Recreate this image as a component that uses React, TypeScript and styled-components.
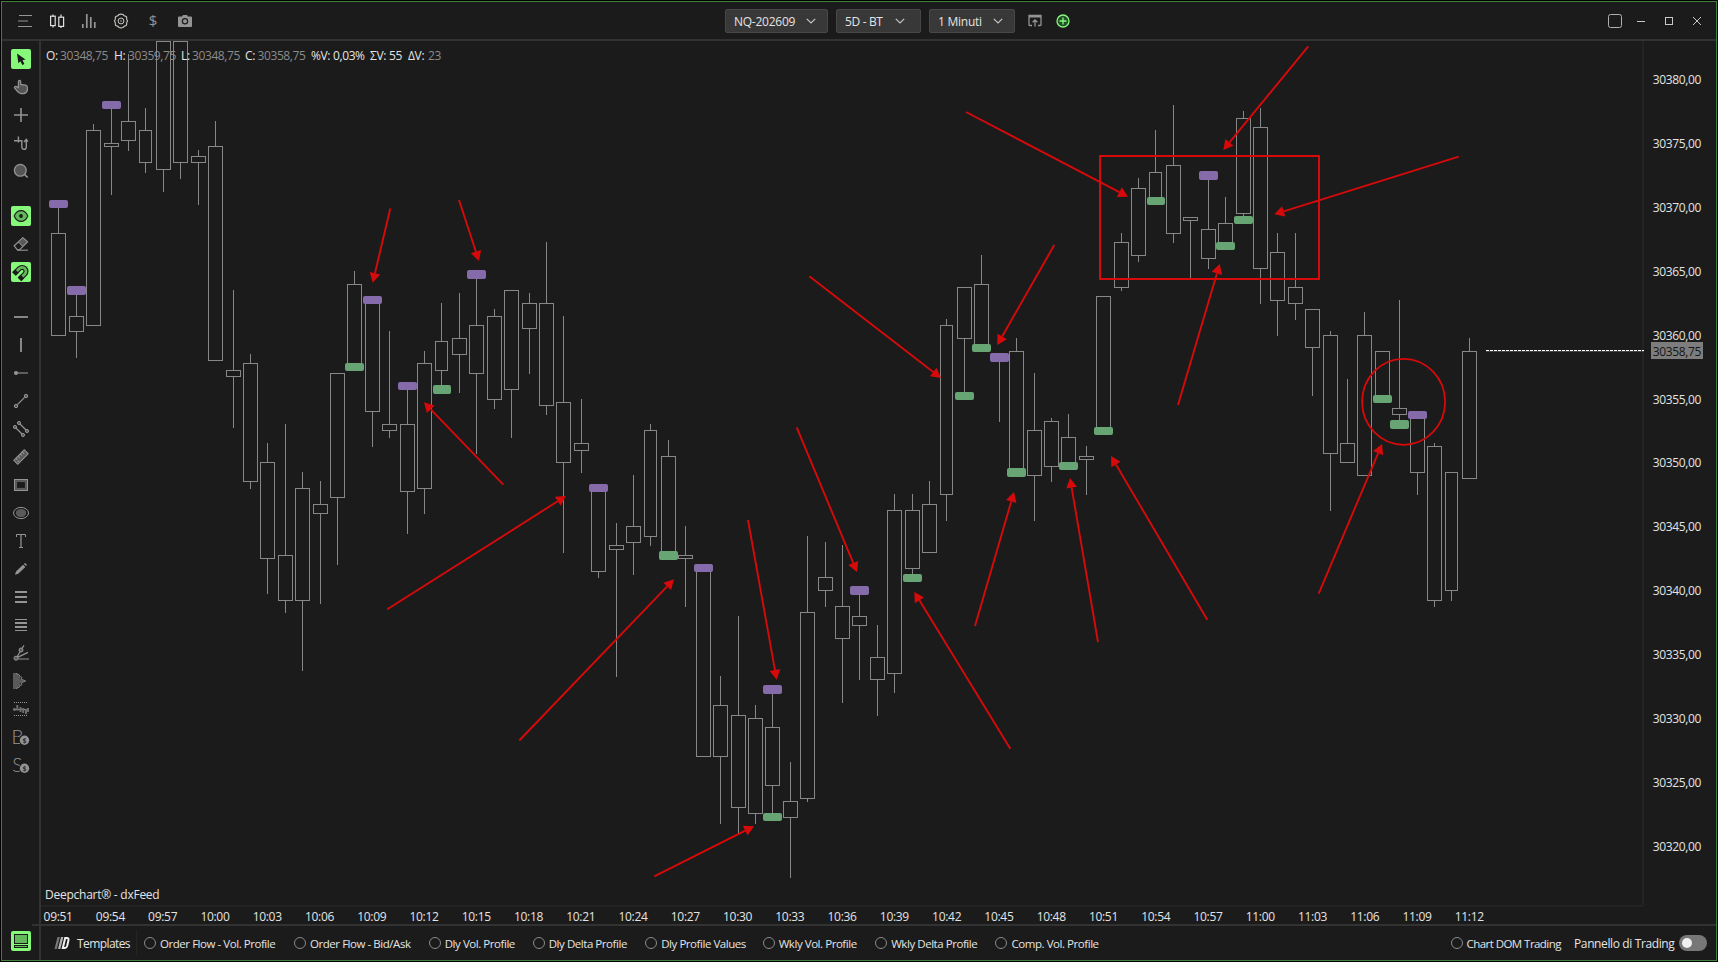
import React from "react";
import styled, { createGlobalStyle } from "styled-components";

const BG = "#1b1b1b";
const LINE = "#323232";
const ICON = "#949494";
const DIM = "#5a5a5a";
const LIME = "#86f97b";
const RED = "#d60a0a";
const GREEN = "#67a575";
const PURPLE = "#866bab";

const GlobalStyle = createGlobalStyle`
  html, body { margin: 0; padding: 0; background: #000; }
  body { font-family: "Open Sans", "Noto Sans", sans-serif; font-size: 12px; color: #e4e4e4; }
  * { box-sizing: border-box; }
  svg { display: block; }
`;

const Root = styled.div`
  width: 1718px;
  height: 962px;
  padding: 1px;
  background: #000;
  overflow: hidden;
`;

const Frame = styled.div`
  display: flex;
  flex-direction: column;
  width: 1716px;
  height: 960px;
  border: 1px solid #40803a;
  background: ${BG};
`;

/* ---------- header ---------- */

const Header = styled.header`
  display: grid;
  grid-template-columns: 723px auto 1fr;
  align-items: center;
  flex: none;
  height: 39px;
  padding-top: 1px;
  border-bottom: 2px solid ${LINE};
`;

const IconRow = styled.div`
  display: flex;
  align-items: center;
  padding-left: 7px;
`;

const HeaderSlot = styled.div<{ $w?: number }>`
  display: flex;
  align-items: center;
  justify-content: center;
  width: ${(p) => p.$w ?? 32}px;
  height: 24px;
`;

const Selects = styled.div`
  display: flex;
  align-items: center;
`;

const Select = styled.div<{ $w: number; $gap?: number; $end?: number; $ls?: number }>`
  display: flex;
  align-items: center;
  justify-content: space-between;
  width: ${(p) => p.$w}px;
  height: 24px;
  margin-right: ${(p) => p.$gap ?? 8}px;
  padding: 0 ${(p) => p.$end ?? 11}px 0 8px;
  border: 1px solid #474747;
  border-radius: 2px;
  background: #383838;
  letter-spacing: ${(p) => p.$ls ?? -0.35}px;
  white-space: nowrap;
`;

const SelectActions = styled.div`
  display: flex;
  align-items: center;
  gap: 12px;
  padding-left: 13px;
`;

const WindowControls = styled.div`
  display: flex;
  align-items: center;
  justify-content: flex-end;
  padding-right: 5px;
`;

/* ---------- body ---------- */

const Body = styled.div`
  display: flex;
  flex: 1;
  min-height: 0;
`;

const Sidebar = styled.nav`
  display: flex;
  flex-direction: column;
  flex: none;
  gap: 17px;
  width: 39px;
  padding: 4px 0 5px 1px;
  border-right: 2px solid ${LINE};
`;

const ToolGroup = styled.div<{ $bottom?: boolean }>`
  display: flex;
  flex-direction: column;
  align-items: center;
  margin-top: ${(p) => (p.$bottom ? "auto" : "0")};
`;

const ToolSlot = styled.div`
  display: flex;
  align-items: center;
  justify-content: center;
  width: 28px;
  height: 28px;
`;

const ToolTile = styled.div<{ $active?: boolean }>`
  display: flex;
  align-items: center;
  justify-content: center;
  width: 20px;
  height: 20px;
  border-radius: 2px;
  background: ${(p) => (p.$active ? LIME : "transparent")};

  svg { flex: none; }
`;

const Main = styled.main`
  display: flex;
  flex-direction: column;
  flex: 1;
  min-width: 0;
`;

const ChartRow = styled.div`
  display: flex;
  flex: none;
  height: 866px;
`;

const Plot = styled.div`
  position: relative;
  flex: none;
  width: 1603px;
  height: 866px;
  border-right: 2px solid #232323;
  border-bottom: 2px solid #232323;
  border-bottom-right-radius: 3px;

  > svg { overflow: visible; }
`;

const Quote = styled.div`
  position: absolute;
  top: 6px;
  left: 5px;
  display: grid;
  grid-template-columns: 68px 67px 64px 66px 59px 38px auto;
  line-height: 17px;
  white-space: nowrap;
`;

const QuoteItem = styled.div<{ $label: number }>`
  display: grid;
  grid-template-columns: ${(p) => p.$label}px auto;
  justify-content: start;
  letter-spacing: -0.35px;
`;

const QuoteValue = styled.span<{ $bright?: boolean }>`
  color: ${(p) => (p.$bright ? "#e4e4e4" : "#8b8b8b")};
  letter-spacing: -0.4px;
`;

const Credit = styled.div`
  position: absolute;
  left: 4px;
  bottom: 0;
  line-height: 20px;
  letter-spacing: -0.25px;
`;

const PriceAxis = styled.div`
  position: relative;
  display: flex;
  flex-direction: column;
  flex: 1;
  padding: 6.8px 0 0 8.7px;
  letter-spacing: -0.35px;
`;

const PriceLabel = styled.div`
  display: flex;
  align-items: center;
  flex: none;
  height: 63.86px;
`;

const PriceTag = styled.div`
  position: absolute;
  top: 301px;
  left: 7px;
  width: 52px;
  height: 17px;
  padding-left: 1.7px;
  background: #7d7d7d;
  color: #151515;
  line-height: 19px;
`;

const TimeAxis = styled.div`
  display: flex;
  flex: none;
  height: 19px;
  margin-left: -9px;
  border-bottom: 2px solid ${LINE};
  line-height: 20px;
`;

const TimeLabel = styled.div`
  flex: none;
  width: 52.27px;
  text-align: center;
  letter-spacing: -0.3px;
`;

const Footer = styled.footer`
  display: flex;
  align-items: center;
  flex: 1;
  padding: 0 9px 0 13px;
  white-space: nowrap;
`;

const TemplatesLabel = styled.div`
  display: flex;
  align-items: center;
  gap: 7px;
  width: 83px;
  height: 26px;
  border-right: 1px solid #242424;
  letter-spacing: -0.58px;
`;

const Radio = styled.div<{ $w: number; $ls?: number }>`
  display: flex;
  align-items: center;
  flex: none;
  gap: 4px;
  width: ${(p) => p.$w}px;
  font-size: 11.5px;
  letter-spacing: ${(p) => p.$ls ?? -0.45}px;
`;

const RadioDot = styled.span`
  flex: none;
  width: 12px;
  height: 12px;
  border: 1px solid #8a8a8a;
  border-radius: 50%;
`;

const RadioList = styled.div`
  display: flex;
  padding-left: 7px;
`;

const FooterRight = styled.div`
  display: flex;
  align-items: center;
  margin-left: auto;
`;

const ToggleLabel = styled.div`
  width: 105px;
  padding-top: 1px;
  letter-spacing: -0.38px;
`;

const Toggle = styled.div`
  width: 28px;
  height: 16px;
  padding: 3px;
  border-radius: 8px;
  background: #777;

  &::before {
    content: "";
    display: block;
    width: 10px;
    height: 10px;
    border-radius: 50%;
    background: #f0f0f0;
  }
`;

/* ---------- icons ---------- */

function Glyph({ children, size = 24 }: { children: React.ReactNode; size?: number }) {
  return (
    <svg width={size} height={size} viewBox="-12 -12 24 24" fill="none" stroke={ICON} strokeWidth={1}>
      {children}
    </svg>
  );
}

const Coin = () => (
  <>
    <circle cx={3.5} cy={3.3} r={5.6} fill={BG} stroke="none" />
    <circle cx={3.5} cy={3.3} r={4.7} fill={ICON} stroke="none" />
    <text x={3.5} y={5.8} fontSize={7} fontWeight={600} textAnchor="middle" fill={BG} stroke="none">$</text>
  </>
);

const headerIcons = [
  <g strokeWidth={1.2}>
    <path d="M-6 -5.5H7M-7 0H3M-7 5.5H7" />
  </g>,
  <g stroke="#e2e2e2" strokeWidth={1.2}>
    <path d="M-4 -6.5V-4.5M-4 4.5V6.5M4 -6.5V-4M4 5.5V7" />
    <rect x={-6.4} y={-4.8} width={4.6} height={9.4} />
    <rect x={1.8} y={-3.8} width={4.8} height={9.2} />
  </g>,
  <path d="M-6.2 7V3M-2.2 7V-7M1.8 7V-4M5.8 7V1" strokeWidth={1.7} />,
  <g stroke="#c8ccc4" strokeWidth={1.1}>
    <path d="M-2 -6.5 Q0 -7.3 2 -6.5 L3.2 -5.3 L5.2 -4.6 Q6 -3.3 5.7 -1.6 L6.6 0 L5.7 1.6 Q6 3.3 5.2 4.6 L3.2 5.3 L2 6.5 Q0 7.3 -2 6.5 L-3.2 5.3 L-5.2 4.6 Q-6 3.3 -5.7 1.6 L-6.6 0 L-5.7 -1.6 Q-6 -3.3 -5.2 -4.6 L-3.2 -5.3Z" />
    <circle r={2.9} strokeWidth={1} />
    <circle r={0.7} fill="#c8ccc4" stroke="none" />
  </g>,
  <text x={0} y={5} fontSize={15} textAnchor="middle" fill={ICON} stroke="none">$</text>,
  <g stroke="none">
    <path d="M-6 -4.5H-3L-2 -6H2L3 -4.5H6Q7 -4.5 7 -3.5V5Q7 6 6 6H-6Q-7 6 -7 5V-3.5Q-7 -4.5 -6 -4.5Z" fill={ICON} />
    <circle cy={0.3} r={3.2} fill={BG} />
    <circle cy={0.3} r={2} fill={ICON} />
  </g>,
];

type Tool = { icon: React.ReactNode; active?: boolean };

const toolGroups: Tool[][] = [
  [
    {
      active: true,
      icon: <path d="M-4 -5.6 L-2.6 4.2 L-0.7 2.2 L1.4 6 L3.4 5 L1.5 1.2 L4.5 0.6Z" fill={BG} stroke="none" />,
    },
    {
      icon: (
        <path
          d="M-2.6 0.5V-5.6Q-2.4 -6.7 -1.4 -6.6Q-0.4 -6.5 -0.3 -5.4V-2.6L4.6 -1.8Q6.4 -1.3 6.4 0.4V3Q5.6 6.3 2.4 6.6H0Q-2.4 6.2 -4 3.8L-6.6 0.7Q-6.5 -0.8 -5 -0.6Z"
          fill="#555" strokeWidth={1.2}
        />
      ),
    },
    { icon: <path d="M-7 0H7M0 -7V7" strokeWidth={1.6} /> },
    {
      icon: (
        <>
          <path d="M-7 -2.2H1.4M-2.6 -6.6V-0.4" strokeWidth={1.4} />
          <path d="M0.8 -2.2V3.4Q0.9 6.3 3.1 6.3Q5.3 6.3 5.3 3.4V-2.6M3 -1L5.3 -3.6L6.9 -1.4" strokeWidth={1.4} />
        </>
      ),
    },
    {
      icon: (
        <>
          <circle cx={-0.7} cy={-0.7} r={5.9} fill="#555" strokeWidth={1.3} />
          <path d="M3.7 3.7L6.7 6.5" strokeWidth={1.6} />
        </>
      ),
    },
  ],
  [
    {
      active: true,
      icon: (
        <g stroke={BG} strokeWidth={1.1}>
          <path d="M-6.8 0Q-4.6 -5.4 0 -5.4Q4.6 -5.4 6.8 0Q4.6 5.4 0 5.4Q-4.6 5.4 -6.8 0Z" fill="#62b85a" />
          <circle r={1.9} fill={BG} stroke="none" />
        </g>
      ),
    },
    {
      icon: (
        <>
          <path d="M-6.8 1.8L1.8 -6.3L6.5 -2.2L-1.6 5.9H-3.6Z" strokeWidth={1.2} />
          <path d="M-2.6 -2L1.8 -6.3L6.5 -2.2L1.8 2.5Z" fill={DIM} />
          <path d="M-3.5 6.2H7" strokeWidth={1.1} />
        </>
      ),
    },
    {
      active: true,
      icon: (
        <g transform="rotate(45) translate(0.3 -0.3)">
          <path
            d="M-5.8 6V-1A5.8 5.8 0 0 1 5.8 -1V6H1.9V-1A1.9 1.9 0 0 0 -1.9 -1V6Z"
            fill="#62b85a" stroke={BG} strokeWidth={1.2}
          />
          <path d="M-5.8 3H-1.9V6H-5.8ZM1.9 3H5.8V6H1.9Z" fill={BG} stroke={BG} />
        </g>
      ),
    },
  ],
  [
    { icon: <path d="M-7 0H7" strokeWidth={1.8} /> },
    { icon: <path d="M0 -7V7" strokeWidth={1.8} /> },
    {
      icon: (
        <>
          <path d="M-4 0H7" stroke="#707070" strokeWidth={1.6} />
          <circle cx={-5} r={2.1} fill={ICON} stroke="none" />
        </>
      ),
    },
    {
      icon: (
        <>
          <path d="M-3.6 3.6L3.6 -3.6" strokeWidth={1.2} />
          <circle cx={-5} cy={5} r={1.7} fill={DIM} />
          <circle cx={5} cy={-5} r={1.7} fill={DIM} />
        </>
      ),
    },
    {
      icon: (
        <>
          <path d="M-6 -2L2 6M-2 -6L6 2" strokeWidth={1.2} />
          <circle cx={-6} cy={-2} r={1.6} fill={DIM} />
          <circle cx={-2} cy={-6} r={1.6} fill={DIM} />
          <circle cx={6} cy={2} r={1.6} fill={DIM} />
          <circle cx={2} cy={6} r={1.6} fill={DIM} />
        </>
      ),
    },
    {
      icon: (
        <g transform="rotate(-45)">
          <rect x={-7.4} y={-2.8} width={14.8} height={5.6} fill={DIM} />
          <path d="M-4.5 -2.8V-0.5M-1.5 -2.8V0M1.5 -2.8V-0.5M4.5 -2.8V0" />
          <circle cx={-5} cy={1} r={0.8} fill={ICON} stroke="none" />
        </g>
      ),
    },
    {
      icon: (
        <>
          <rect x={-5.2} y={-4.2} width={10.4} height={8.4} stroke={DIM} strokeWidth={2.6} />
          <rect x={-6.5} y={-5.5} width={13} height={11} />
        </>
      ),
    },
    {
      icon: (
        <>
          <ellipse rx={7.5} ry={5.6} />
          <ellipse rx={5.2} ry={4.1} fill={DIM} stroke="none" />
        </>
      ),
    },
    {
      icon: (
        <>
          <path d="M0 -6V6" stroke="#707070" strokeWidth={1.8} />
          <path d="M-4.5 -4V-6.5H4.5V-4M-2 6.5H2" />
        </>
      ),
    },
    {
      icon: (
        <path d="M-6 5.8L-5 2.6L2 -4.2L4.4 -2L-2.8 4.8ZM2.8 -5L4 -6L6 -4.2L5.1 -2.9Z" fill={ICON} stroke="none" />
      ),
    },
    { icon: <path d="M-6 -5H6M-6 0H6M-6 5H6" strokeWidth={2} /> },
    {
      icon: (
        <>
          <path d="M-6 -5.5H6M-6 5.5H6" />
          <path d="M-6 -2H6M-6 2H6" strokeWidth={2} />
        </>
      ),
    },
    {
      icon: (
        <>
          <path d="M-4 4L0 -3L3 -7.6M-4 4.6L7 -0.6M-3 6H8" strokeWidth={1.2} />
          <circle cx={-5} cy={5.2} r={2} fill={DIM} />
          <circle cx={0} cy={-3} r={2} fill={DIM} />
        </>
      ),
    },
    {
      icon: (
        <>
          <path d="M-8 -8H-4L-1.5 -5.5H-3.2L-0.5 -3.5L-1.5 -2.2L4.6 0L-1.5 2.2L-0.5 3.7L-3.2 5.5H-2L-4 8H-8Z" fill={DIM} stroke="none" />
          <path d="M-5 -7.5L-1.5 -6V-4.5L1 -3.6L0 -2L4.6 0L0 2L1 3.8L-1.5 4.6V6L-5 7.5" stroke="#8a8a8a" strokeWidth={0.9} />
        </>
      ),
    },
    {
      icon: (
        <>
          <path d="M-7 -6.5H7M-7 6.5H7" strokeDasharray="1 1" />
          <path d="M-8 0.5H8" strokeWidth={1.2} />
          <path d="M-6.5 -1V2M-3.7 -4V1.5M-0.5 -2V3M2.2 -1V4M5 0V5M7 -1V3" stroke="#6c6c6c" strokeWidth={2} />
        </>
      ),
    },
    {
      icon: (
        <>
          <text x={-9.4} y={6.6} fontSize={19} fontFamily="Lato" fontWeight={300} fill={ICON} stroke="none">B</text>
          <Coin />
        </>
      ),
    },
    {
      icon: (
        <>
          <text x={-8.8} y={6.6} fontSize={19} fontFamily="Lato" fontWeight={300} fill={ICON} stroke="none">S</text>
          <Coin />
        </>
      ),
    },
  ],
];

const PanelIcon = () => (
  <Glyph>
    <rect x={-6.5} y={-6.5} width={13} height={9} fill="#62b85a" stroke={BG} />
    <rect x={-6.5} y={4.5} width={13} height={2} fill="#62b85a" stroke={BG} />
  </Glyph>
);

const Chevron = () => (
  <svg width={10} height={6} viewBox="0 0 10 6" fill="none" stroke="#c4c4c4" strokeWidth={1.2}>
    <path d="M0.8 0.8L5 5L9.2 0.8" />
  </svg>
);

/* ---------- chart data ---------- */

// [x, high, body top, body bottom, low, half width]; 0 stands for "no wick"
type Candle = [number, number, number, number, number, number?];

const candles: Candle[] = [
  [58, 204, 233, 335, 0], [76, 290, 316, 331, 358], [93, 124, 130, 325, 0], [111, 105, 143, 146, 195],
  [128, 54, 121, 140, 151], [145, 108, 130, 162, 173, 6], [163, 0, 41, 169, 192], [180, 0, 41, 162, 179],
  [198, 150, 156, 162, 205], [215, 121, 146, 360, 0], [233, 290, 370, 376, 428], [250, 354, 363, 481, 489],
  [267, 443, 462, 558, 594], [285, 424, 555, 600, 613], [302, 472, 488, 600, 671], [320, 481, 504, 513, 604],
  [337, 0, 373, 497, 565], [354, 271, 284, 367, 0], [372, 0, 300, 411, 447], [389, 331, 424, 430, 438],
  [407, 386, 424, 491, 534], [424, 351, 363, 488, 514], [441, 303, 341, 370, 390, 6], [459, 293, 338, 354, 393],
  [476, 275, 325, 373, 454], [494, 309, 316, 399, 409], [511, 0, 290, 389, 438], [529, 293, 303, 328, 374],
  [546, 242, 303, 405, 415], [563, 316, 402, 462, 553], [581, 399, 443, 450, 473], [598, 0, 488, 571, 578],
  [616, 523, 545, 549, 677], [633, 475, 526, 542, 575], [650, 424, 430, 536, 546, 6], [668, 440, 456, 555, 0],
  [685, 526, 555, 558, 607], [703, 0, 568, 756, 0], [720, 676, 705, 756, 824], [738, 616, 715, 807, 833],
  [755, 705, 718, 813, 824], [772, 690, 727, 785, 817], [790, 762, 801, 817, 878], [807, 536, 612, 798, 802],
  [825, 542, 577, 590, 607], [842, 545, 606, 638, 703], [859, 590, 616, 625, 680], [877, 625, 657, 679, 716],
  [894, 494, 510, 673, 693], [912, 494, 510, 568, 578], [929, 481, 504, 552, 0], [946, 319, 325, 494, 521, 6],
  [964, 0, 287, 338, 396], [981, 255, 284, 348, 0], [999, 0, 356, 359, 422], [1016, 338, 351, 472, 0],
  [1034, 373, 430, 475, 521], [1051, 418, 421, 466, 482], [1068, 414, 437, 466, 0], [1086, 446, 456, 459, 495],
  [1103, 0, 296, 431, 0], [1121, 233, 242, 287, 291], [1138, 178, 188, 255, 262], [1155, 130, 172, 201, 0, 6],
  [1173, 105, 165, 233, 243], [1190, 0, 217, 220, 278], [1208, 176, 229, 258, 269], [1225, 197, 223, 246, 0],
  [1243, 111, 118, 213, 220], [1260, 108, 127, 268, 304], [1277, 233, 252, 300, 336], [1295, 233, 287, 303, 320],
  [1312, 0, 309, 347, 396], [1330, 331, 335, 453, 511], [1347, 379, 443, 462, 0], [1364, 312, 335, 475, 0],
  [1382, 0, 351, 399, 0], [1399, 300, 408, 414, 424], [1417, 0, 415, 472, 495], [1434, 443, 446, 600, 607],
  [1451, 0, 472, 590, 601, 6], [1469, 338, 351, 478, 0],
];

// [x, top, height, colour, width]
type Mark = [number, number, number, string, number?];

const marks: Mark[] = [
  [49, 200, 8, PURPLE], [67, 286, 9, PURPLE], [102, 101, 8, PURPLE], [345, 363, 8, GREEN],
  [363, 296, 8, PURPLE], [398, 382, 8, PURPLE], [433, 385, 9, GREEN, 18], [467, 270, 9, PURPLE],
  [589, 484, 8, PURPLE], [659, 551, 9, GREEN], [694, 564, 8, PURPLE], [763, 685, 9, PURPLE],
  [763, 813, 8, GREEN], [850, 586, 9, PURPLE], [903, 574, 8, GREEN], [955, 392, 8, GREEN],
  [972, 344, 8, GREEN], [990, 353, 9, PURPLE], [1007, 468, 9, GREEN], [1059, 462, 8, GREEN],
  [1094, 427, 8, GREEN], [1147, 197, 8, GREEN, 18], [1199, 171, 9, PURPLE], [1216, 242, 8, GREEN],
  [1234, 216, 8, GREEN], [1373, 395, 8, GREEN], [1390, 420, 9, GREEN], [1408, 411, 8, PURPLE],
];

// [tail x, tail y, tip x, tip y]
const arrows: [number, number, number, number][] = [
  [390.3, 208.5, 372.7, 282.7], [459, 200, 479, 261], [503.3, 484.7, 424, 402.3], [387.3, 609.3, 566, 496],
  [519.3, 740.5, 674, 579.3], [654.3, 876.3, 754, 826.3], [748, 520, 776.7, 679.7], [796.7, 427.3, 857, 572],
  [1010.3, 748.7, 914.3, 592], [809.3, 276.3, 941, 378], [1054.3, 245, 997.3, 345], [975, 626, 1014, 492],
  [1098, 642, 1070, 478], [1207.3, 619.7, 1111, 456], [1178, 405, 1219.7, 264], [966, 112, 1128, 196.7],
  [1308.3, 46.3, 1223.3, 150], [1458.7, 156.7, 1274.3, 214.3], [1318.7, 593.7, 1382, 444],
];

function Arrow({ from: [x1, y1, x2, y2] }: { from: [number, number, number, number] }) {
  const len = Math.hypot(x2 - x1, y2 - y1);
  const ux = (x2 - x1) / len;
  const uy = (y2 - y1) / len;
  const bx = x2 - ux * 9.8;
  const by = y2 - uy * 9.8;
  const h = 5.4;
  return (
    <g>
      <line x1={x1} y1={y1} x2={bx} y2={by} stroke={RED} strokeWidth={1.9} />
      <polygon points={`${x2},${y2} ${bx - uy * h},${by + ux * h} ${bx + uy * h},${by - ux * h}`} fill={RED} />
    </g>
  );
}

function Chart() {
  return (
    <svg width={1601} height={864} viewBox="41 41 1601 864">
      <g fill="none" stroke="#878787" strokeWidth={1}>
        {candles.map(([x, high, top, bottom, low, half = 7]) => (
          <g key={x}>
            {high > 0 && <path d={`M${x + 0.5} ${high}V${top}`} />}
            <rect x={x - half + 0.5} y={top + 0.5} width={half * 2} height={bottom - top} />
            {low > 0 && <path d={`M${x + 0.5} ${bottom + 1}V${low}`} />}
          </g>
        ))}
      </g>
      {marks.map(([x, y, h, colour, w = 19]) => (
        <rect key={`${x}-${y}`} x={x} y={y} width={w} height={h} rx={2} fill={colour} />
      ))}
      <path d="M1486 351.2H1644" stroke="#5a5a5a" strokeWidth={1} />
      <path d="M1486 350.5H1644" stroke="#fff" strokeWidth={1} strokeDasharray="3 1" />
      <rect x={1100} y={156} width={219} height={123} fill="none" stroke={RED} strokeWidth={2} />
      <ellipse cx={1403.6} cy={401.8} rx={41.5} ry={43} fill="none" stroke={RED} strokeWidth={1.8} />
      {arrows.map((a) => (
        <Arrow key={a.join()} from={a} />
      ))}
    </svg>
  );
}

const quote: [string, string, number, boolean?][] = [
  ["O:", "30348,75", 14],
  ["H:", "30359,75", 14],
  ["L:", "30348,75", 11],
  ["C:", "30358,75", 12.5],
  ["%V:", "0,03%", 22, true],
  ["ΣV:", "55", 19, true],
  ["ΔV:", "23", 20],
];

const prices = ["30380,00", "30375,00", "30370,00", "30365,00", "30360,00", "30355,00", "30350,00",
  "30345,00", "30340,00", "30335,00", "30330,00", "30325,00", "30320,00"];

const times = Array.from({ length: 28 }, (_, i) => {
  const m = 9 * 60 + 51 + i * 3;
  return `${String(Math.floor(m / 60)).padStart(2, "0")}:${String(m % 60).padStart(2, "0")}`;
});

const templates: [string, number][] = [
  ["Order Flow - Vol. Profile", 150],
  ["Order Flow - Bid/Ask", 134.7],
  ["Dly Vol. Profile", 104],
  ["Dly Delta Profile", 112.5],
  ["Dly Profile Values", 117.5],
  ["Wkly Vol. Profile", 112.5],
  ["Wkly Delta Profile", 120.3],
  ["Comp. Vol. Profile", 110],
];

export default function App() {
  return (
    <>
      <GlobalStyle />
      <Root>
        <Frame>
          <Header>
            <IconRow>
              {headerIcons.map((icon, i) => (
                <HeaderSlot key={i}><Glyph>{icon}</Glyph></HeaderSlot>
              ))}
            </IconRow>
            <Selects>
              <Select $w={103} $ls={-0.25}>NQ-202609<Chevron /></Select>
              <Select $w={85} $end={15}>5D - BT<Chevron /></Select>
              <Select $w={86} $gap={0} $ls={-0.25}>1 Minuti<Chevron /></Select>
              <SelectActions>
                <svg width={14} height={14} viewBox="0 0 14 14" fill="none" stroke={ICON} strokeWidth={1.3}>
                  <path d="M4 11.5H1.8Q1 11.5 1 10.7V1.5H13V10.7Q13 11.5 12.2 11.5H10M1 2.8H13M7 12.5V6M4.6 8.2L7 5.8L9.4 8.2" />
                </svg>
                <svg width={18} height={18} viewBox="-9 -9 18 18" fill="none" stroke={LIME} strokeWidth={1.3}>
                  <circle r={6} fill="#24502a" />
                  <path d="M-3.5 0H3.5M0 -3.5V3.5" />
                </svg>
              </SelectActions>
            </Selects>
            <WindowControls>
              <HeaderSlot $w={24}>
                <Glyph><rect x={-6.5} y={-6.5} width={13} height={13} rx={2} stroke="#b0b0b0" /></Glyph>
              </HeaderSlot>
              <HeaderSlot $w={28}><Glyph><path d="M-4 0.5H4" stroke="#c8c8c8" /></Glyph></HeaderSlot>
              <HeaderSlot $w={28}>
                <Glyph><rect x={-3.5} y={-3.5} width={7} height={7} stroke="#c8c8c8" /></Glyph>
              </HeaderSlot>
              <HeaderSlot $w={28}><Glyph><path d="M-4 -4L4 4M4 -4L-4 4" stroke="#c8c8c8" /></Glyph></HeaderSlot>
            </WindowControls>
          </Header>
          <Body>
            <Sidebar>
              {toolGroups.map((group, g) => (
                <ToolGroup key={g}>
                  {group.map((tool, i) => (
                    <ToolSlot key={i}>
                      <ToolTile $active={tool.active}><Glyph>{tool.icon}</Glyph></ToolTile>
                    </ToolSlot>
                  ))}
                </ToolGroup>
              ))}
              <ToolGroup $bottom>
                <ToolSlot><ToolTile $active><PanelIcon /></ToolTile></ToolSlot>
              </ToolGroup>
            </Sidebar>
            <Main>
              <ChartRow>
                <Plot>
                  <Chart />
                  <Quote>
                    {quote.map(([label, value, w, bright]) => (
                      <QuoteItem key={label} $label={w}>
                        <span>{label}</span>
                        <QuoteValue $bright={bright}>{value}</QuoteValue>
                      </QuoteItem>
                    ))}
                  </Quote>
                  <Credit>Deepchart® - dxFeed</Credit>
                </Plot>
                <PriceAxis>
                  {prices.map((p) => (
                    <PriceLabel key={p}>{p}</PriceLabel>
                  ))}
                  <PriceTag>30358,75</PriceTag>
                </PriceAxis>
              </ChartRow>
              <TimeAxis>
                {times.map((t) => (
                  <TimeLabel key={t}>{t}</TimeLabel>
                ))}
              </TimeAxis>
              <Footer>
                <TemplatesLabel>
                  <svg width={16} height={12} viewBox="0 0 16 12" fill="none">
                    <path d="M0.5 12L3.5 0H5.8L2.8 12Z" fill="#777" />
                    <path d="M4 12L7 0H9.3L6.3 12Z" fill="#b5b5b5" />
                    <path d="M8.8 11L11.2 1H13.3Q14.9 1.2 14.4 3.5L13.2 8.7Q12.5 11 11 11Z" stroke="#f2f2f2" strokeWidth={2} />
                  </svg>
                  Templates
                </TemplatesLabel>
                <RadioList>
                  {templates.map(([label, w]) => (
                    <Radio key={label} $w={w}><RadioDot />{label}</Radio>
                  ))}
                </RadioList>
                <FooterRight>
                  <Radio $w={123.5} $ls={-0.55}><RadioDot />Chart DOM Trading</Radio>
                  <ToggleLabel>Pannello di Trading</ToggleLabel>
                  <Toggle />
                </FooterRight>
              </Footer>
            </Main>
          </Body>
        </Frame>
      </Root>
    </>
  );
}
